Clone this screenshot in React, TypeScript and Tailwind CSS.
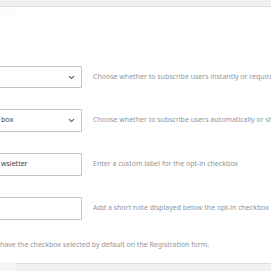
import React from "react";

const Chevron = () => (
  <svg width="7" height="5" viewBox="0 0 7 5" className="shrink-0">
    <path d="M1 1.2 L3.5 3.6 L6 1.2" fill="none" stroke="#50575e" strokeWidth="1.1" />
  </svg>
);

function Row({ children, desc, mt }: { children: React.ReactNode; desc: string; mt: string }) {
  return (
    <div className={`flex items-center ${mt}`}>
      {children}
      <div className="ml-[11px] shrink-0 whitespace-nowrap text-[7px] text-[#8f959b]">{desc}</div>
    </div>
  );
}

const box = "-ml-[20px] w-[102px] shrink-0 border border-[#c3c4c7] rounded-[1px] bg-white";

export default function App() {
  return (
    <div
      className="w-[271px] h-[271px] overflow-hidden bg-white flex flex-col"
      style={{ fontFamily: '"Noto Sans", "Open Sans", sans-serif' }}
    >
      <div className="h-[7px] bg-[#f0f0f1] border-b border-[#dcdcde] shrink-0" />
      <div className="w-[16px] h-[7px] bg-[#fafafa] mt-[2px] shrink-0" />
      <div className="flex flex-col shrink-0">
        <Row mt="mt-[50px]" desc="Choose whether to subscribe users instantly or require confirmation">
          <div className={`${box} h-[22px] flex items-center justify-end pr-[6px]`}>
            <Chevron />
          </div>
        </Row>
        <Row mt="mt-[21px]" desc="Choose whether to subscribe users automatically or show a checkbox">
          <div className={`${box} h-[23px] flex items-center justify-between pl-[20px] pr-[6px]`}>
            <span className="text-[7px] text-[#3c434a]">box</span>
            <Chevron />
          </div>
        </Row>
        <Row mt="mt-[21px]" desc="Enter a custom label for the opt-in checkbox">
          <div className={`${box} h-[23px] flex items-center pl-[20px]`}>
            <span className="text-[7px] text-[#3c434a]">wsletter</span>
          </div>
        </Row>
        <Row mt="mt-[21px]" desc="Add a short note displayed below the opt-in checkbox">
          <div className={`${box} h-[23px]`} />
        </Row>
        <div className="mt-[20px] whitespace-nowrap text-[7px] text-[#8f959b]">
          have the checkbox selected by default on the Registration form.
        </div>
      </div>
      <div className="mt-auto flex items-end shrink-0">
        <div className="w-[16px] h-[9px] bg-[#f6f6f6]" />
        <div className="flex-1 h-[8px] bg-[#f0f0f1] border-t border-[#dcdcde]" />
      </div>
    </div>
  );
}
